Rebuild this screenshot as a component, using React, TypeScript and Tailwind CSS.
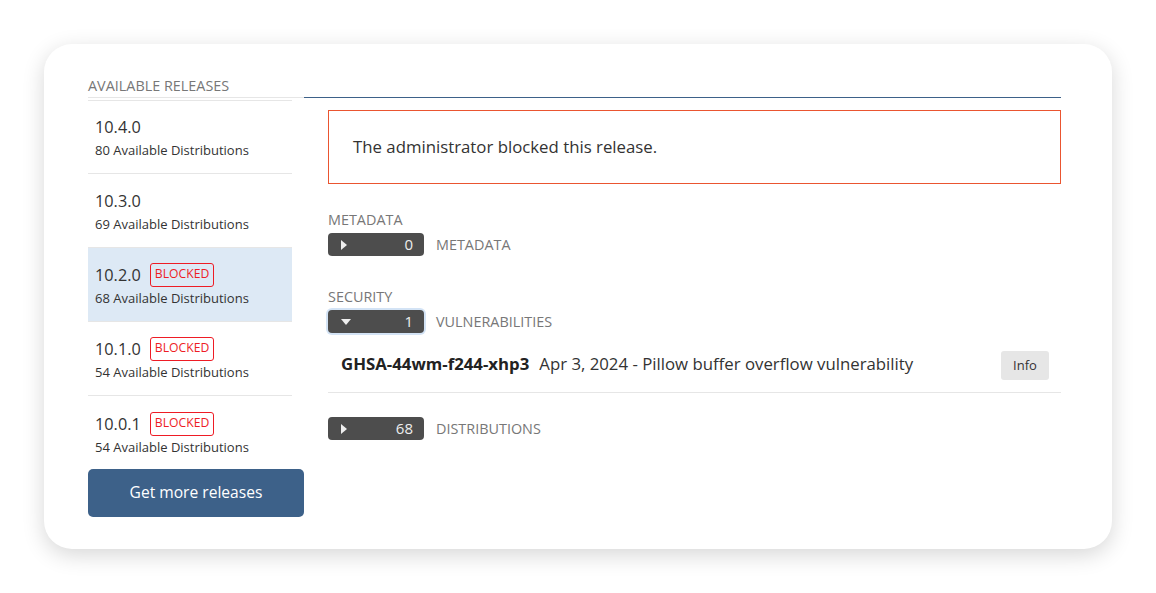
import React from "react";

type Release = {
  version: string;
  count: number;
  blocked?: boolean;
  selected?: boolean;
};

const releases: Release[] = [
  { version: "10.4.0", count: 80 },
  { version: "10.3.0", count: 69 },
  { version: "10.2.0", count: 68, blocked: true, selected: true },
  { version: "10.1.0", count: 54, blocked: true },
  { version: "10.0.1", count: 54, blocked: true },
];

function Caret({ open }: { open?: boolean }) {
  return open ? (
    <svg width="10" height="6" viewBox="0 0 10 6" className="fill-[#eeeeee]">
      <path d="M0 0h10L5 6z" />
    </svg>
  ) : (
    <svg width="6" height="10" viewBox="0 0 6 10" className="fill-[#eeeeee]">
      <path d="M0 0v10l6-5z" />
    </svg>
  );
}

function Counter({
  count,
  label,
  open,
  focused,
}: {
  count: number;
  label: string;
  open?: boolean;
  focused?: boolean;
}) {
  return (
    <div className="flex items-center gap-3">
      <button
        className={`flex h-[23px] w-[96px] items-center justify-between rounded-[4px] bg-[#4d4d4d] pl-[13px] pr-[11px] text-[15px] text-[#eeeeee] ${
          focused ? "ring-2 ring-[#d3e3f5]" : ""
        }`}
      >
        <Caret open={open} />
        <span>{count}</span>
      </button>
      <span className="text-[14.4px] text-[#777777]">{label}</span>
    </div>
  );
}

function ReleaseItem({
  release,
  first,
  last,
}: {
  release: Release;
  first?: boolean;
  last?: boolean;
}) {
  return (
    <div
      className={`flex flex-col justify-center px-[7px] ${
        first || last ? "h-[73px]" : "h-[74px]"
      } ${last ? "pt-[2px]" : "border-b border-[#e6e6e6]"} ${
        release.selected ? "bg-[#dde9f5]" : ""
      }`}
    >
      <div className="flex items-center gap-[9px]">
        <span className="text-[16.3px] leading-[24px] text-[#333333]">
          {release.version}
        </span>
        {release.blocked && (
          <span className="flex h-[24px] items-center rounded-[3px] border border-[#ee1c25] px-[4px] text-[12.2px] text-[#ee1c25]">
            BLOCKED
          </span>
        )}
      </div>
      <span className="mt-[2px] text-[13px] leading-[18px] text-[#333333]">
        {release.count} Available Distributions
      </span>
    </div>
  );
}

export default function App() {
  return (
    <div className="min-h-screen bg-white p-[44px] font-['Open_Sans',sans-serif]">
      <div className="flex h-[505px] w-[1068px] rounded-[28px] bg-white pl-[44px] pr-[51px] pt-[33px] shadow-[0_6px_22px_rgba(0,0,0,0.16)]">
        <div className="flex w-[216px] flex-col">
          <div className="h-[21px] border-b border-[#e6e6e6] text-[14.4px] leading-[18px] text-[#777777]">
            AVAILABLE RELEASES
          </div>
          <div className="mt-[2px] w-[204px] border-t border-[#e6e6e6]">
            {releases.map((r, i) => (
              <ReleaseItem
                key={r.version}
                release={r}
                first={i === 0}
                last={i === releases.length - 1}
              />
            ))}
          </div>
          <button className="h-[48px] w-[216px] rounded-[5px] bg-[#3d6189] text-[15.6px] text-white">
            Get more releases
          </button>
        </div>

        <div className="flex flex-1 flex-col">
          <div className="h-[21px] border-b border-[#3d6189]" />
          <div className="pl-6">
            <div className="mt-[12px] flex h-[74px] items-center border border-[#ea5530] px-6 text-[16.8px] text-[#333333]">
              The administrator blocked this release.
            </div>

            <div className="mt-[26px] text-[14.4px] leading-[20px] text-[#777777]">
              METADATA
            </div>
            <div className="mt-[3px]">
              <Counter count={0} label="METADATA" />
            </div>

            <div className="mt-[31px] text-[14.4px] leading-[20px] text-[#777777]">
              SECURITY
            </div>
            <div className="mt-[3px]">
              <Counter count={1} label="VULNERABILITIES" open focused />
            </div>

            <div className="mt-[18px] flex items-center justify-between border-b border-[#e6e6e6] pb-[12px] pl-[13px] pr-[12px]">
              <div className="flex items-center gap-[10px] pb-[3px] text-[16.8px] text-[#333333]">
                <span className="font-bold text-[#222222]">
                  GHSA-44wm-f244-xhp3
                </span>
                <span>Apr 3, 2024 - Pillow buffer overflow vulnerability</span>
              </div>
              <button className="h-[29px] w-[48px] rounded-[3px] bg-[#e6e6e6] text-[13px] text-[#333333]">
                Info
              </button>
            </div>

            <div className="mt-[24px]">
              <Counter count={68} label="DISTRIBUTIONS" />
            </div>
          </div>
        </div>
      </div>
    </div>
  );
}
